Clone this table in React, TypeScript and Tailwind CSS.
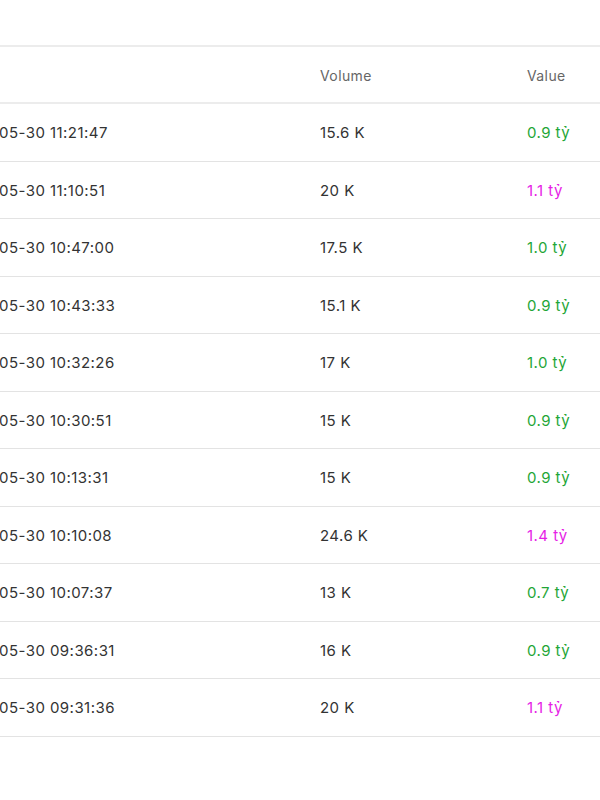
const rows = [
  { time: "05-30 11:21:47", volume: "15.6 K", value: "0.9 tỷ", up: true },
  { time: "05-30 11:10:51", volume: "20 K", value: "1.1 tỷ", up: false },
  { time: "05-30 10:47:00", volume: "17.5 K", value: "1.0 tỷ", up: true },
  { time: "05-30 10:43:33", volume: "15.1 K", value: "0.9 tỷ", up: true },
  { time: "05-30 10:32:26", volume: "17 K", value: "1.0 tỷ", up: true },
  { time: "05-30 10:30:51", volume: "15 K", value: "0.9 tỷ", up: true },
  { time: "05-30 10:13:31", volume: "15 K", value: "0.9 tỷ", up: true },
  { time: "05-30 10:10:08", volume: "24.6 K", value: "1.4 tỷ", up: false },
  { time: "05-30 10:07:37", volume: "13 K", value: "0.7 tỷ", up: true },
  { time: "05-30 09:36:31", volume: "16 K", value: "0.9 tỷ", up: true },
  { time: "05-30 09:31:36", volume: "20 K", value: "1.1 tỷ", up: false },
];

export default function App() {
  return (
    <div
      className="w-[600px] h-[800px] bg-white overflow-hidden pt-[45px]"
      style={{ fontFamily: "Inter, 'Noto Sans', sans-serif" }}
    >
      <div className="border-t-2 border-[#ececec]">
        <div className="flex items-center h-[57px] pt-[2px] border-b-2 border-[#ececec] text-[14px] tracking-[0.4px] text-[#666]">
          <div className="w-[320px] -ml-[1px]"></div>
          <div className="w-[208px] pl-[1px]">Volume</div>
          <div className="flex-1">Value</div>
        </div>
        {rows.map((r, i) => (
          <div
            key={i}
            className="flex items-center h-[57.5px] pt-[2px] border-b border-[#e3e3e3] text-[15px] tracking-[0.45px] text-[#333]"
          >
            <div className="w-[320px] -ml-[1px]">{r.time}</div>
            <div className="w-[208px] pl-[1px]">{r.volume}</div>
            <div className={r.up ? "flex-1 text-[#1fa637]" : "flex-1 text-[#e61ee6]"}>
              {r.value}
            </div>
          </div>
        ))}
      </div>
    </div>
  );
}
